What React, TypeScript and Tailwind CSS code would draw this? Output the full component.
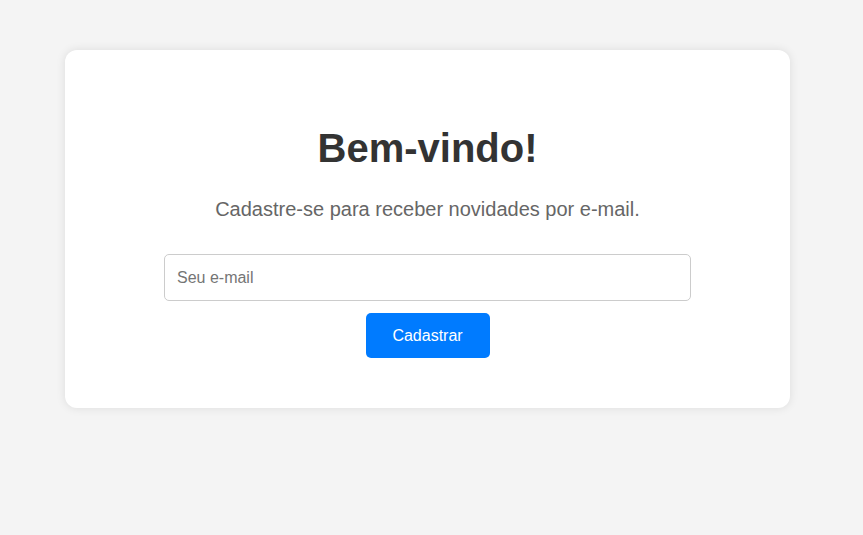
import React from 'react';

const App = () => {
  return (
    <div className="min-h-[535px] w-full bg-[#f4f4f4] pt-[50px] font-['Liberation_Sans',Arial,sans-serif]">
      <div className="ml-[65px] w-[725px] rounded-[12px] bg-white pt-[75px] pb-[50px] shadow-[0_0_10px_rgba(0,0,0,0.1)] flex flex-col items-center">
        <h1 className="text-[40px] leading-[46px] font-bold text-[#333]">Bem-vindo!</h1>
        <p className="mt-[27px] text-[20px] leading-[23px] text-[#666]">Cadastre-se para receber novidades por e-mail.</p>
        <input
          type="email"
          placeholder="Seu e-mail"
          className="mt-[33px] w-[527px] h-[47px] rounded-[5px] border border-[#ccc] px-[12px] text-[16px] text-[#333] placeholder:text-[#757575] outline-none"
        />
        <button className="mt-[12px] h-[45px] w-[124px] rounded-[5px] bg-[#007bff] text-white text-[16px]">Cadastrar</button>
      </div>
    </div>
  );
};

export default App;
